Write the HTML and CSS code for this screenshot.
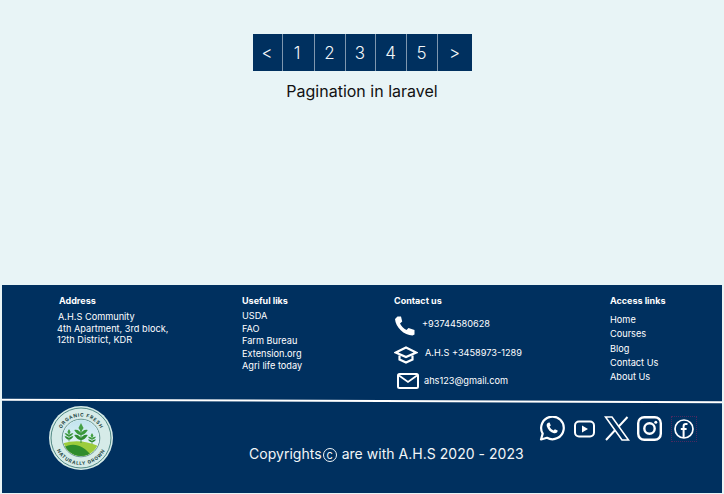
FILE: index.html
```html
<!DOCTYPE html>
<html lang="en">
<head>
    <meta charset="UTF-8">
    <meta name="viewport" content="width=device-width, initial-scale=1.0">
    <title>Pagination in laravel</title>
    <link rel="stylesheet" href="styles.css">
</head>
<body>

    <main class="content">
        <nav class="pagination">
            <a href="#">&lt;</a>
            <a href="#" class="page-one">1</a>
            <a href="#">2</a>
            <a href="#">3</a>
            <a href="#">4</a>
            <a href="#">5</a>
            <a href="#">&gt;</a>
        </nav>
        <p class="caption">Pagination in laravel</p>
    </main>

    <footer class="footer">
        <div class="columns">
            <div class="col">
                <h4>Address</h4>
                <p>A.H.S Community</p>
                <p>4th Apartment, 3rd block,</p>
                <p>12th District, KDR</p>
            </div>
            <div class="col col-useful">
                <h4>Useful liks</h4>
                <a href="#">USDA</a>
                <a href="#">FAO</a>
                <a href="#">Farm Bureau</a>
                <a href="#">Extension.org</a>
                <a href="#">Agri life today</a>
            </div>
            <div class="col col-contact">
                <h4>Contact us</h4>
                <div class="contact-row row-phone">
                    <svg width="22" height="20" viewBox="0 0 22 20"><path d="M3.5 0.5 L7 0.5 L8.2 5.5 L6 7.5 C7.5 10.5 9.5 12.5 12.5 14 L14.5 12 L20.5 14 L20.5 18.5 L18.5 19.5 C10 19.5 1.5 11 1 3 Z" fill="#fff"/></svg>
                    <span>+93744580628</span>
                </div>
                <div class="contact-row row-cap">
                    <svg width="24" height="18" viewBox="0 0 24 18"><path d="M1.8 6.5 L12 1.5 L22.2 6.5 L12 11 Z" fill="none" stroke="#fff" stroke-width="2.2"/><path d="M5.5 9.5 V13.5 L12 16.5 L18.5 13.5 V9.5" fill="none" stroke="#fff" stroke-width="2.2"/></svg>
                    <span>A.H.S +3458973-1289</span>
                </div>
                <div class="contact-row row-mail">
                    <svg width="22" height="16" viewBox="0 0 22 16"><rect x="1" y="1" width="20" height="14" rx="1.5" fill="none" stroke="#fff" stroke-width="2"/><path d="M2 2.5 L11 9 L20 2.5" fill="none" stroke="#fff" stroke-width="1.8"/></svg>
                    <span>ahs123@gmail.com</span>
                </div>
            </div>
            <div class="col col-access">
                <h4>Access links</h4>
                <a href="#">Home</a>
                <a href="#">Courses</a>
                <a href="#">Blog</a>
                <a href="#">Contact Us</a>
                <a href="#">About Us</a>
            </div>
        </div>

        <hr class="divider">

        <div class="bottom">
            <svg class="logo" width="64" height="64" viewBox="0 0 64 64">
                <defs>
                    <clipPath id="scene"><circle cx="32" cy="32" r="18"/></clipPath>
                    <linearGradient id="sky" x1="0" y1="0" x2="0" y2="1">
                        <stop offset="0" stop-color="#bfe3ee"/>
                        <stop offset="1" stop-color="#f4fbfb"/>
                    </linearGradient>
                    <path id="arcTop" d="M10.5 32 A21.5 21.5 0 0 1 53.5 32"/>
                    <path id="arcBottom" d="M5 32 A27 27 0 0 0 59 32"/>
                    <g id="plant">
                        <path d="M0 2 V20" stroke="#3a8f3a" stroke-width="1.2"/>
                        <path d="M0 0 L3 5 L0 9 L-3 5 Z" fill="#45a045"/>
                        <path d="M0 12 C-3 12 -6 10 -8 7 C-4 6 -2 8 0 10 C2 8 4 6 8 7 C6 10 3 12 0 12 Z" fill="#3a983a"/>
                        <path d="M0 17 C-3 17 -6 15 -8 12 C-4 11 -2 13 0 15 C2 13 4 11 8 12 C6 15 3 17 0 17 Z" fill="#2f8a30"/>
                    </g>
                </defs>
                <circle cx="32" cy="32" r="32" fill="#d6ebe8"/>
                <circle cx="32" cy="32" r="30" fill="none" stroke="#2f6f6a" stroke-width=".8"/>
                <circle cx="32" cy="32" r="18.8" fill="#f4faf7" stroke="#2f6f6a" stroke-width=".7"/>
                <g clip-path="url(#scene)">
                    <rect x="12" y="12" width="40" height="40" fill="url(#sky)"/>
                    <path d="M12 38 C24 34 36 34 52 41 V52 H12 Z" fill="#9ccc3c"/>
                    <path d="M12 43 C22 36 34 37 44 52 H12 Z" fill="#2e8c2c"/>
                </g>
                <use href="#plant" transform="translate(32 17) scale(.85 1)"/>
                <use href="#plant" transform="translate(20 23) scale(.55 .62)"/>
                <use href="#plant" transform="translate(43 27) scale(.5 .55)"/>
                <text class="logo-text" text-anchor="middle"><textPath href="#arcTop" startOffset="50%">ORGANIC FRESH</textPath></text>
                <text class="logo-text" text-anchor="middle"><textPath href="#arcBottom" startOffset="50%">NATURALLY GROWN</textPath></text>
            </svg>

            <p class="copyright">Copyrights<span class="copy-mark">c</span> are with A.H.S 2020 - 2023</p>

            <div class="socials">
                <svg width="26" height="25" viewBox="0 0 26 25"><path d="M2 23.5 L3.7 17.6 A11.3 11.3 0 1 1 8 21.8 Z" fill="none" stroke="#fff" stroke-width="2.2" stroke-linejoin="round"/><path d="M9.2 6.8 C8 7.3 7.4 8.6 7.8 10.2 C8.7 13.5 11.6 16.3 15 17.2 C16.6 17.6 18 17 18.5 15.6 L18.7 14.6 L15.9 13.2 L14.6 14.6 C13 14 11.2 12.2 10.6 10.6 L11.8 9.4 L10.6 6.6 Z" fill="#fff"/></svg>
                <svg class="yt" width="21" height="18" viewBox="0 0 21 18"><rect x="1" y="1.5" width="19" height="15" rx="4" fill="none" stroke="#fff" stroke-width="2"/><path d="M8 5.5 L14 9 L8 12.5 Z" fill="#fff"/></svg>
                <svg class="x" width="26" height="25" viewBox="0 0 26 25"><path d="M1.5 1 H8 L24.5 24 H18 Z" fill="none" stroke="#fff" stroke-width="1.6"/><path d="M23.5 1 L14.5 10.8 M11 14.2 L2 24" fill="none" stroke="#fff" stroke-width="2"/></svg>
                <svg class="ig" width="25" height="25" viewBox="0 0 25 25"><rect x="1.2" y="1.2" width="22.6" height="22.6" rx="6" fill="none" stroke="#fff" stroke-width="2.4"/><circle cx="12.5" cy="12.5" r="5.2" fill="none" stroke="#fff" stroke-width="2.4"/><circle cx="18.8" cy="6.2" r="1.5" fill="#fff"/></svg>
                <span class="fb-box">
                    <svg width="20" height="20" viewBox="0 0 20 20"><circle cx="10" cy="10" r="9" fill="none" stroke="#fff" stroke-width="1.7"/><path d="M13.5 5 H11.8 C10.4 5 9.6 5.9 9.6 7.3 V19 M6.8 10 H12.6" fill="none" stroke="#fff" stroke-width="2"/></svg>
                </span>
            </div>
        </div>
    </footer>

</body>
</html>
```

FILE: styles.css
```css
/* General reset */
* {
    margin: 0;
    padding: 0;
    box-sizing: border-box;
    font-family: Inter, "Noto Sans", sans-serif;
}

html, body {
    height: 100%;
}

body {
    display: flex;
    flex-direction: column;
    height: 494px;
    padding: 0 2px 1px 2px;
    background-color: #e8f4f6;
    overflow: hidden;
}

a {
    color: inherit;
    text-decoration: none;
}

.content {
    height: 285px;
    padding-top: 34px;
    display: flex;
    flex-direction: column;
    align-items: center;
}

.pagination {
    display: grid;
    grid-template-columns: 30px 32px 31px 30px 31px 31px 34px;
    height: 37px;
    margin-left: 1px;
    background-color: #00305f;
}

.pagination a {
    display: flex;
    align-items: center;
    justify-content: center;
    padding-right: 1px;
    color: #f2f6f8;
    font-size: 17px;
    font-weight: 350;
    border-right: 1px solid #7f97af;
}

.pagination a:last-child {
    border-right: none;
}

.pagination .page-one {
    padding-right: 3px;
}

.caption {
    margin-top: 10px;
    font-size: 16px;
    line-height: 20px;
    color: #111;
}

.footer {
    flex: 1;
    background-color: #00305f;
    color: #fff;
}

.columns {
    display: grid;
    grid-template-columns: 185px 152px 216px 110px;
    height: 112px;
    padding: 10px 0 0 55px;
}

.col h4 {
    font-size: 9px;
    font-weight: 700;
    line-height: 11px;
    margin-left: 2px;
    margin-bottom: 5px;
}

.col p {
    font-size: 9.2px;
    line-height: 11.5px;
}

.col a {
    display: block;
    font-size: 9.2px;
    line-height: 12.6px;
}

.col p:first-of-type {
    margin-left: 1px;
}

.col-useful h4 {
    margin-left: 0;
    margin-bottom: 4px;
}

.col-contact h4 {
    margin-left: 0;
    margin-bottom: 10px;
}

.col-access h4 {
    margin-left: 0;
    margin-bottom: 7px;
}

.col-access a {
    line-height: 14.3px;
}

.contact-row {
    display: flex;
    align-items: center;
    font-size: 9.2px;
}

.row-phone span {
    margin-left: 6px;
    margin-bottom: 6px;
}

.row-cap {
    margin-top: 10px;
}

.row-cap span {
    margin-left: 7px;
    margin-bottom: 6px;
}

.row-mail {
    margin-top: 9px;
}

.row-mail svg {
    margin-left: 3px;
}

.row-mail span {
    margin-left: 5px;
    margin-bottom: 2px;
}

.divider {
    border: none;
    height: 1.6px;
    background-color: #fff;
    margin-top: 2.5px;
    transform: rotate(0.21deg);
}

.bottom {
    display: flex;
    padding: 4.5px 26px 0 47px;
}

.logo text {
    font-weight: 700;
}

.logo-text {
    font-size: 4.8px;
    letter-spacing: .7px;
    fill: #1f4744;
}

.copyright {
    margin: 37px 0 0 136px;
    font-size: 14px;
    line-height: 22px;
    letter-spacing: .03px;
    white-space: nowrap;
    color: #f2f6f8;
}

.copy-mark {
    display: inline-flex;
    align-items: center;
    justify-content: center;
    width: 14px;
    height: 14px;
    margin: 0 1px 0 1px;
    border: 1.2px solid #f2f6f8;
    border-radius: 50%;
    font-size: 11px;
    line-height: 1;
    vertical-align: 0;
}

.socials {
    display: flex;
    align-items: center;
    height: 26px;
    margin: 10px 0 0 15px;
    gap: 9px;
}

.socials .ig {
    margin-left: -2px;
}

.fb-box {
    display: flex;
    padding: 2px;
    margin-left: 1px;
    outline: 1px dotted #4a2a60;
}
```
